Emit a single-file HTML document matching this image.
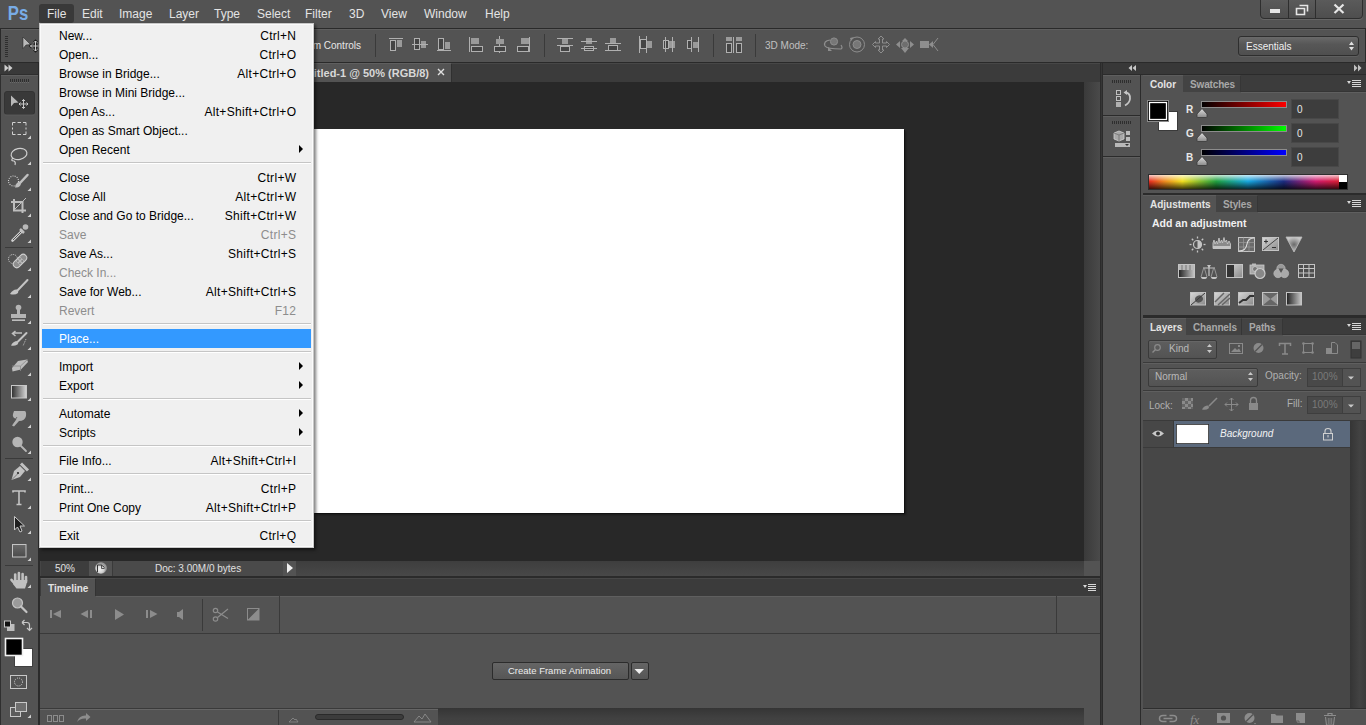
<!DOCTYPE html><html><head><meta charset="utf-8"><style>
*{margin:0;padding:0;box-sizing:border-box}
html,body{width:1366px;height:725px;overflow:hidden;background:#535353;font-family:"Liberation Sans",sans-serif;position:relative}
.a{position:absolute}
.t{position:absolute;white-space:nowrap;line-height:1}
svg{position:absolute;overflow:visible}
.mi{position:absolute;top:7px;font-size:12px;color:#e4e4e4;line-height:14px;white-space:nowrap}
.sep{position:absolute;width:1px;background:#3b3b3b}
#menu{left:39px;top:23px;width:275px;height:525px;background:#f0f0f0;border:1px solid #c8c8c8;box-shadow:inset 1px 1px 0 #fafafa,inset -1px -1px 0 #fbfbfb,2px 2px 3px rgba(0,0,0,.5)}
.it{position:absolute;left:0;width:273px;height:19px;font-size:12px;color:#000}
.it .l{position:absolute;left:19px;top:3px;line-height:14px;white-space:nowrap}
.it .r{position:absolute;right:16.7px;top:3px;line-height:14px;white-space:nowrap;letter-spacing:0.3px}
.it.d{color:#8d8d8d}
.it.h{background:#3399ff;color:#fff;left:2px;width:269px}
.it.h .l{left:17px}
.ms{position:absolute;left:3px;width:268px;height:1px;background:#c5c5c5}
.ms2{position:absolute;left:3px;width:268px;height:1px;background:#ffffff}
.arr{position:absolute;left:259px;top:5px;width:0;height:0;border-left:4px solid #000;border-top:4px solid transparent;border-bottom:4px solid transparent}
</style></head><body>
<div class="a" style="left:0;top:0;width:1366px;height:28px;background:#535353"></div>
<svg class="a" style="left:0;top:0" width="40" height="28"><text x="7.8" y="20.2" font-family="Liberation Sans" font-weight="bold" font-size="21" textLength="20.5" lengthAdjust="spacingAndGlyphs" fill="#78ace6">Ps</text></svg>
<div class="a" style="left:39px;top:4px;width:35px;height:19px;background:#393939;border-radius:3px"></div>
<div class="mi" style="left:47px">File</div>
<div class="mi" style="left:82px">Edit</div>
<div class="mi" style="left:119px">Image</div>
<div class="mi" style="left:169px">Layer</div>
<div class="mi" style="left:214px">Type</div>
<div class="mi" style="left:257px">Select</div>
<div class="mi" style="left:305px">Filter</div>
<div class="mi" style="left:349px">3D</div>
<div class="mi" style="left:381px">View</div>
<div class="mi" style="left:424px">Window</div>
<div class="mi" style="left:485px">Help</div>
<div class="a" style="left:0;top:28px;width:1366px;height:1px;background:#2a2a2a"></div>
<div class="a" style="left:0;top:29px;width:1366px;height:1px;background:#5e5e5e"></div>
<div class="a" style="left:0;top:62px;width:1366px;height:1px;background:#2a2a2a"></div>
<div class="a" style="left:0;top:28px;width:1px;height:35px;background:#2a2a2a"></div>
<div class="a" style="left:1365px;top:28px;width:1px;height:35px;background:#2a2a2a"></div>
<svg class="a" style="left:0;top:0" width="1366" height="63" viewBox="0 0 1366 63"><rect x="5" y="36" width="3" height="1" fill="#2e2e2e"/><rect x="5" y="38" width="3" height="1" fill="#2e2e2e"/><rect x="5" y="40" width="3" height="1" fill="#2e2e2e"/><rect x="5" y="42" width="3" height="1" fill="#2e2e2e"/><rect x="5" y="44" width="3" height="1" fill="#2e2e2e"/><rect x="5" y="46" width="3" height="1" fill="#2e2e2e"/><rect x="5" y="48" width="3" height="1" fill="#2e2e2e"/><rect x="5" y="50" width="3" height="1" fill="#2e2e2e"/><rect x="5" y="52" width="3" height="1" fill="#2e2e2e"/><rect x="5" y="54" width="3" height="1" fill="#2e2e2e"/><rect x="5" y="56" width="3" height="1" fill="#2e2e2e"/><path d="M23 37 L30.5 44.5 L26 45 L23 48.5Z" fill="#b9b9b9" stroke="#1e1e1e" stroke-width="0.5"/><path d="M35.5 41 V51 M30.5 46 H40.5 M34 42.5 L35.5 41 L37 42.5 M34 49.5 L35.5 51 L37 49.5 M32 44.5 L30.5 46 L32 47.5 M39 44.5 L40.5 46 L39 47.5" stroke="#1e1e1e" fill="none" stroke-width="2.6"/><path d="M35.5 41 V51 M30.5 46 H40.5 M34 42.5 L35.5 41 L37 42.5 M34 49.5 L35.5 51 L37 49.5 M32 44.5 L30.5 46 L32 47.5 M39 44.5 L40.5 46 L39 47.5" stroke="#d0d0d0" fill="none" stroke-width="1"/><line x1="375.5" y1="34" x2="375.5" y2="57" stroke="#3a3a3a"/><line x1="544.5" y1="34" x2="544.5" y2="57" stroke="#3a3a3a"/><line x1="713.5" y1="34" x2="713.5" y2="57" stroke="#3a3a3a"/><line x1="755.5" y1="34" x2="755.5" y2="57" stroke="#3a3a3a"/><line x1="389" y1="38.5" x2="403" y2="38.5" stroke="#b0b0b0" stroke-width="1"/><rect x="390.5" y="40.5" width="5" height="10" fill="#444" stroke="#b0b0b0" stroke-width="1"/><rect x="397" y="40" width="5" height="7" fill="#9a9a9a"/><rect x="414.5" y="38.5" width="5" height="11" fill="#444" stroke="#b0b0b0" stroke-width="1"/><rect x="421" y="41" width="5" height="7" fill="#9a9a9a"/><line x1="412" y1="44.5" x2="428" y2="44.5" stroke="#b0b0b0" stroke-width="1"/><rect x="438.5" y="38.5" width="5" height="11" fill="#444" stroke="#b0b0b0" stroke-width="1"/><rect x="445" y="42" width="5" height="7" fill="#9a9a9a"/><line x1="437" y1="50.5" x2="451" y2="50.5" stroke="#b0b0b0" stroke-width="1"/><line x1="469.5" y1="37" x2="469.5" y2="52" stroke="#b0b0b0" stroke-width="1"/><rect x="471" y="38" width="8" height="6" fill="#9a9a9a"/><rect x="471.5" y="46.5" width="11" height="5" fill="#444" stroke="#b0b0b0" stroke-width="1"/><line x1="499.5" y1="36" x2="499.5" y2="53" stroke="#b0b0b0" stroke-width="1"/><rect x="496" y="39" width="8" height="5" fill="#9a9a9a"/><rect x="494.5" y="46.5" width="11" height="5" fill="#444" stroke="#b0b0b0" stroke-width="1"/><line x1="529.5" y1="37" x2="529.5" y2="52" stroke="#b0b0b0" stroke-width="1"/><rect x="521" y="38" width="8" height="6" fill="#9a9a9a"/><rect x="517.5" y="46.5" width="11" height="5" fill="#444" stroke="#b0b0b0" stroke-width="1"/><line x1="557" y1="38.5" x2="573" y2="38.5" stroke="#b0b0b0" stroke-width="1"/><rect x="562" y="39" width="6" height="5" fill="#9a9a9a"/><line x1="557" y1="45.5" x2="573" y2="45.5" stroke="#b0b0b0" stroke-width="1"/><rect x="560.5" y="46.5" width="9" height="5" fill="#444" stroke="#b0b0b0" stroke-width="1"/><rect x="586" y="38" width="6" height="6" fill="#9a9a9a"/><line x1="581" y1="41.5" x2="597" y2="41.5" stroke="#b0b0b0" stroke-width="1"/><rect x="584.5" y="46.5" width="9" height="4" fill="#444" stroke="#b0b0b0" stroke-width="1"/><line x1="581" y1="48.5" x2="597" y2="48.5" stroke="#b0b0b0" stroke-width="1"/><rect x="610" y="38" width="6" height="5" fill="#9a9a9a"/><line x1="605" y1="43.5" x2="621" y2="43.5" stroke="#b0b0b0" stroke-width="1"/><rect x="608.5" y="45.5" width="9" height="5" fill="#444" stroke="#b0b0b0" stroke-width="1"/><line x1="605" y1="50.5" x2="621" y2="50.5" stroke="#b0b0b0" stroke-width="1"/><line x1="639.5" y1="36" x2="639.5" y2="53" stroke="#b0b0b0" stroke-width="1"/><rect x="640.5" y="39.5" width="6" height="9" fill="#444" stroke="#b0b0b0" stroke-width="1"/><line x1="646.5" y1="36" x2="646.5" y2="53" stroke="#b0b0b0" stroke-width="1"/><rect x="647" y="41" width="5" height="7" fill="#9a9a9a"/><rect x="663.5" y="40.5" width="5" height="8" fill="#444" stroke="#b0b0b0" stroke-width="1"/><line x1="665.5" y1="37" x2="665.5" y2="52" stroke="#b0b0b0" stroke-width="1"/><rect x="669" y="41" width="6" height="7" fill="#9a9a9a"/><line x1="672.5" y1="37" x2="672.5" y2="52" stroke="#b0b0b0" stroke-width="1"/><rect x="687.5" y="40.5" width="4" height="8" fill="#444" stroke="#b0b0b0" stroke-width="1"/><line x1="691.5" y1="37" x2="691.5" y2="52" stroke="#b0b0b0" stroke-width="1"/><rect x="693" y="42" width="5" height="6" fill="#9a9a9a"/><line x1="698.5" y1="37" x2="698.5" y2="52" stroke="#b0b0b0" stroke-width="1"/><rect x="726" y="37" width="6" height="4" fill="#9a9a9a"/><rect x="726.5" y="43.5" width="5" height="9" fill="#444" stroke="#b0b0b0" stroke-width="1"/><line x1="733.5" y1="37" x2="733.5" y2="53" stroke="#b0b0b0" stroke-width="1"/><rect x="736" y="37" width="6" height="4" fill="#9a9a9a"/><rect x="736.5" y="43.5" width="5" height="9" fill="#444" stroke="#b0b0b0" stroke-width="1"/><circle cx="834" cy="41.5" r="3.6" fill="#777" stroke="#8e8e8e" stroke-width="1"/><path d="M830 40 Q823 41 825 46 Q827 49 841 49 Q843 48 841 45" fill="none" stroke="#8e8e8e" stroke-width="1.2"/><path d="M828 47 L832 51 L828 51Z" fill="#8e8e8e"/><circle cx="857" cy="44.5" r="7.5" fill="none" stroke="#8e8e8e" stroke-width="1"/><circle cx="857" cy="44.5" r="4" fill="#777" stroke="#8e8e8e" stroke-width="1"/><path d="M850 38 L854 37 L851 41Z" fill="#8e8e8e"/><path d="M881 36 L884 39 H882.5 V43 H886.5 V41.5 L889.5 44.5 L886.5 47.5 V46 H882.5 V50 H884 L881 53 L878 50 H879.5 V46 H875.5 V47.5 L872.5 44.5 L875.5 41.5 V43 H879.5 V39 H878Z" fill="none" stroke="#8e8e8e" stroke-width="1"/><path d="M905 38 L908 41 H902Z M905 53 L909 48 H901Z M896 44.5 L900 41 V48Z M914 44.5 L910 41 V48Z" fill="#8e8e8e"/><circle cx="905" cy="44.5" r="3.5" fill="#6e6e6e" stroke="#8e8e8e"/><rect x="920" y="41" width="9" height="7" fill="#8e8e8e"/><path d="M929 44.5 L933 41 V48Z" fill="#8e8e8e"/><path d="M938 38 L933 44.5 L938 51" fill="none" stroke="#8e8e8e" stroke-width="1"/></svg>
<div class="t" style="right:1005px;top:41px;font-size:10px;color:#e6e6e6">Show Transform Controls</div>
<div class="t" style="left:765px;top:41px;font-size:10px;color:#c0c0c0">3D Mode:</div>
<div class="a" style="left:1238px;top:36px;width:121px;height:20px;border:1px solid #2e2e2e;border-radius:3px;background:linear-gradient(#6a6a6a,#575757 40%,#4f4f4f);box-shadow:0 1px 0 #5f5f5f"></div>
<div class="t" style="left:1246px;top:42px;font-size:10px;color:#f0f0f0">Essentials</div>
<svg class="a" style="left:0;top:0" width="1366" height="63"><path d="M1349 45 L1351.5 41.5 L1354 45Z M1349 47 L1351.5 50.5 L1354 47Z" fill="#e0e0e0"/></svg>
<div class="a" style="left:1260px;top:-3px;width:103px;height:22px;border:1px solid #2e2e2e;border-radius:0 0 4px 4px;background:linear-gradient(#5c5c5c,#4e4e4e);box-shadow:0 1px 0 #666"></div>
<div class="a" style="left:1288px;top:0;width:1px;height:18px;background:#2e2e2e"></div>
<div class="a" style="left:1315px;top:0;width:1px;height:18px;background:#2e2e2e"></div>
<svg class="a" style="left:0;top:0" width="1366" height="28"><rect x="1270" y="9" width="10" height="4" fill="#e6e6e6"/><path d="M1299.5 5.5 H1307.5 V11.5 M1296.5 8.5 H1304.5 V14.5 H1296.5Z" fill="none" stroke="#e6e6e6" stroke-width="1.6"/><path d="M1334.5 4.5 L1343.5 13 M1343.5 4.5 L1334.5 13" stroke="#e6e6e6" stroke-width="2.2"/></svg>
<div class="a" style="left:0;top:63px;width:38px;height:662px;background:#535353;border-left:1px solid #2f2f2f"></div>
<div class="a" style="left:0;top:63px;width:38px;height:11px;background:#393939"></div>
<div class="a" style="left:38px;top:63px;width:2px;height:662px;background:#2b2b2b"></div>
<div class="a" style="left:1px;top:74px;width:37px;height:1px;background:#2e2e2e"></div>
<div class="a" style="left:1px;top:75px;width:37px;height:1px;background:#5f5f5f"></div>
<svg class="a" style="left:0;top:0" width="40" height="725" viewBox="0 0 40 725"><path d="M4.5 64.5 L8.5 68 L4.5 71.5Z M8.5 64.5 L12.5 68 L8.5 71.5Z" fill="#cfcfcf"/><rect x="10" y="79" width="1" height="3" fill="#2e2e2e"/><rect x="10" y="82" width="1" height="1" fill="#6a6a6a"/><rect x="12" y="79" width="1" height="3" fill="#2e2e2e"/><rect x="12" y="82" width="1" height="1" fill="#6a6a6a"/><rect x="14" y="79" width="1" height="3" fill="#2e2e2e"/><rect x="14" y="82" width="1" height="1" fill="#6a6a6a"/><rect x="16" y="79" width="1" height="3" fill="#2e2e2e"/><rect x="16" y="82" width="1" height="1" fill="#6a6a6a"/><rect x="18" y="79" width="1" height="3" fill="#2e2e2e"/><rect x="18" y="82" width="1" height="1" fill="#6a6a6a"/><rect x="20" y="79" width="1" height="3" fill="#2e2e2e"/><rect x="20" y="82" width="1" height="1" fill="#6a6a6a"/><rect x="22" y="79" width="1" height="3" fill="#2e2e2e"/><rect x="22" y="82" width="1" height="1" fill="#6a6a6a"/><rect x="24" y="79" width="1" height="3" fill="#2e2e2e"/><rect x="24" y="82" width="1" height="1" fill="#6a6a6a"/><rect x="26" y="79" width="1" height="3" fill="#2e2e2e"/><rect x="26" y="82" width="1" height="1" fill="#6a6a6a"/><rect x="28" y="79" width="1" height="3" fill="#2e2e2e"/><rect x="28" y="82" width="1" height="1" fill="#6a6a6a"/><rect x="4.5" y="91.5" width="30" height="23" rx="2.5" fill="#393939" stroke="#333" stroke-width="1"/><line x1="5" y1="115" x2="34" y2="115" stroke="#5c5c5c"/><path d="M11 95.5 L18.5 102.5 L14 103 L11 106.5Z" fill="#b9b9b9"/><path d="M23.5 99.5 V108.5 M19 104 H28" stroke="#c8c8c8" stroke-width="1"/><path d="M22 101 L23.5 99.5 L25 101 M22 107 L23.5 108.5 L25 107 M20.5 102.5 L19 104 L20.5 105.5 M26.5 102.5 L28 104 L26.5 105.5" stroke="#c8c8c8" fill="none"/><path d="M31 135.5 L31 139 L27.5 139Z" fill="#d0d0d0"/><path d="M31 161.5 L31 165 L27.5 165Z" fill="#d0d0d0"/><path d="M31 187.5 L31 191 L27.5 191Z" fill="#d0d0d0"/><path d="M31 213.5 L31 217 L27.5 217Z" fill="#d0d0d0"/><path d="M31 239.5 L31 243 L27.5 243Z" fill="#d0d0d0"/><path d="M31 267.5 L31 271 L27.5 271Z" fill="#d0d0d0"/><path d="M31 294.5 L31 298 L27.5 298Z" fill="#d0d0d0"/><path d="M31 320.5 L31 324 L27.5 324Z" fill="#d0d0d0"/><path d="M31 346.5 L31 350 L27.5 350Z" fill="#d0d0d0"/><path d="M31 372.5 L31 376 L27.5 376Z" fill="#d0d0d0"/><path d="M31 397.5 L31 401 L27.5 401Z" fill="#d0d0d0"/><path d="M31 424.5 L31 428 L27.5 428Z" fill="#d0d0d0"/><path d="M31 450.5 L31 454 L27.5 454Z" fill="#d0d0d0"/><path d="M31 477.5 L31 481 L27.5 481Z" fill="#d0d0d0"/><path d="M31 505.5 L31 509 L27.5 509Z" fill="#d0d0d0"/><path d="M31 530.5 L31 534 L27.5 534Z" fill="#d0d0d0"/><path d="M31 557.5 L31 561 L27.5 561Z" fill="#d0d0d0"/><path d="M31 584.5 L31 588 L27.5 588Z" fill="#d0d0d0"/><path d="M31 714.5 L31 718 L27.5 718Z" fill="#d0d0d0"/><path d="M12.5 125.5 V122.5 H15.5 M17.5 122.5 H21 M23 122.5 H26 V125.5 M26 127.5 V129.5 M26 131.5 V134.5 H23 M21 134.5 H17.5 M15.5 134.5 H12.5 V131.5 M12.5 129.5 V127.5" fill="none" stroke="#d2d2d2" stroke-width="1"/><ellipse cx="19" cy="154" rx="8" ry="5.5" fill="none" stroke="#cfcfcf" stroke-width="1.2" transform="rotate(-12 19 154)"/><path d="M13 158 Q10 161 14 161 Q16 162 15 165" fill="none" stroke="#cfcfcf" stroke-width="1.1"/><circle cx="13.5" cy="181" r="5" fill="none" stroke="#e0e0e0" stroke-width="1.1" stroke-dasharray="0.9 1.3"/><path d="M27.5 175 L20 183" stroke="#c0c0c0" stroke-width="2.5" stroke-linecap="round"/><path d="M15 187.5 Q16 182 20 181.5 Q22 183 20 186 Q18 188 15 187.5Z" fill="#bdbdbd"/><path d="M14 199 V210.5 H26 M11 202 H22.5 V213" fill="none" stroke="#bdbdbd" stroke-width="2"/><path d="M15 209 L26 198" stroke="#bdbdbd" stroke-width="1"/><path d="M12.5 240.5 L22 231" stroke="#d0d0d0" stroke-width="2.6" stroke-linecap="round"/><path d="M13 240 L21.5 231.5" stroke="#555" stroke-width="1"/><path d="M20 229 L24 233" stroke="#c0c0c0" stroke-width="2.5"/><circle cx="25.5" cy="227" r="2.8" fill="#b8b8b8"/><line x1="5" y1="247.5" x2="33" y2="247.5" stroke="#3a3a3a"/><circle cx="13" cy="259" r="4.5" fill="none" stroke="#e6e6e6" stroke-width="1" stroke-dasharray="0.9 1.2"/><g transform="rotate(-45 20 261)"><rect x="12" y="257.5" width="16" height="7" rx="3.5" fill="#8e8e8e" stroke="#d0d0d0" stroke-width="1"/><rect x="17" y="258" width="6" height="6" fill="#b8b8b8"/><circle cx="18.5" cy="259.5" r="0.6" fill="#444"/><circle cx="21.5" cy="259.5" r="0.6" fill="#444"/><circle cx="18.5" cy="262.5" r="0.6" fill="#444"/><circle cx="21.5" cy="262.5" r="0.6" fill="#444"/></g><path d="M27.5 280 L17 291" stroke="#c4c4c4" stroke-width="2" stroke-linecap="round"/><path d="M10 294 Q13 289 17 289.5 Q19 291 18 293 Q15 295.5 10 294Z" fill="#c4c4c4"/><circle cx="18.5" cy="307.5" r="2.8" fill="#b4b4b4"/><rect x="17" y="309" width="3" height="5" fill="#b4b4b4"/><rect x="11" y="314" width="15" height="4" fill="#b4b4b4"/><rect x="12" y="319.5" width="13" height="1.3" fill="#d8d8d8"/><path d="M26.5 333 L18 341.5" stroke="#c4c4c4" stroke-width="2" stroke-linecap="round"/><path d="M11 345.5 Q13 341 17.5 341 Q19 343 17.5 344.5 Q14 346.5 11 345.5Z" fill="#c4c4c4"/><path d="M22 333 H13 M15.5 331 L12.5 333.5 L15.5 336" fill="none" stroke="#c0c0c0" stroke-width="1.5"/><path d="M26 339 L23 346" stroke="#e0e0e0" stroke-dasharray="0.8 1.2"/><path d="M12 368 L18 361 L27 359.5 L28 362 L21 369.5 L12.5 371.5Z" fill="#bdbdbd"/><path d="M12 366 H20.5 L27.5 359.5" fill="none" stroke="#8a8a8a" stroke-width="0.8"/><path d="M20.5 366 V371" stroke="#8a8a8a" stroke-width="0.8"/><defs><linearGradient id="gr1" x1="0" x2="1"><stop offset="0" stop-color="#2e2e2e"/><stop offset="1" stop-color="#d6d6d6"/></linearGradient><linearGradient id="gr2" x1="0" x2="0" y1="0" y2="1"><stop offset="0" stop-color="#6a6a6a"/><stop offset="1" stop-color="#4a4a4a"/></linearGradient></defs><rect x="11.5" y="385.5" width="15" height="12.5" fill="url(#gr1)" stroke="#c8c8c8" stroke-width="1"/><path d="M14 411 H24.5 Q26.5 411 26 416 Q25 421 19 421 L14 426.5 L12 425.5 L16.5 419 Q12 418 13 414Z" fill="#b2b2b2"/><path d="M17 417 L13 423" stroke="#555" stroke-width="0.8"/><circle cx="17.5" cy="442" r="5.2" fill="#b6b6b6"/><path d="M20.5 445.5 L26 451" stroke="#b6b6b6" stroke-width="1.8" stroke-linecap="round"/><line x1="5" y1="458.5" x2="33" y2="458.5" stroke="#3a3a3a"/><path d="M11.5 480 L14 471 L20 466 L25 471 L20 477Z" fill="#c2c2c2"/><path d="M21 463.5 L28 470.5" stroke="#c2c2c2" stroke-width="3"/><circle cx="18" cy="473" r="1.1" fill="#2a2a2a"/><path d="M12 479.5 L17.5 474" stroke="#5a5a5a" stroke-width="0.7"/><path d="M13 492.5 V491 H25 V492.5 M19 491 V504.5 M16.5 504.5 H21.5" fill="none" stroke="#c4c4c4" stroke-width="1.6"/><path d="M14.5 516.5 V530 L17.5 527 L20 532 L22 531 L20 526 L24.5 526Z" fill="#1e1e1e" stroke="#c8c8c8" stroke-width="1"/><rect x="12.5" y="544.5" width="13.5" height="12.5" fill="url(#gr2)" stroke="#c4c4c4" stroke-width="1"/><line x1="5" y1="565.5" x2="33" y2="565.5" stroke="#3a3a3a"/><g stroke="#c0c0c0" stroke-width="2.6" stroke-linecap="round"><path d="M15.2 574.5 V582"/><path d="M18.9 573 V581"/><path d="M22.6 574 V581"/><path d="M26 577 V582"/><path d="M11.5 579.8 L15.5 584.5"/></g><path d="M14 580 H27.3 L26.2 585 L25 588.5 H16.5 L13 584Z" fill="#c0c0c0"/><circle cx="17.5" cy="603" r="5" fill="#9a9a9a" stroke="#c4c4c4" stroke-width="1.2"/><path d="M21 606.5 L26.5 612" stroke="#c4c4c4" stroke-width="2.2" stroke-linecap="round"/><rect x="7" y="624" width="7.5" height="7" fill="#bdbdbd"/><rect x="4.5" y="621" width="6" height="6" fill="#111" stroke="#c8c8c8" stroke-width="1"/><path d="M23 622.5 H27 Q29.5 622.5 29.5 625 V630 M22 622.5 L24.5 620 M22 622.5 L24.5 625 M27 628 L29.5 630.5 L32 628" fill="none" stroke="#c8c8c8" stroke-width="1.2"/><rect x="14.5" y="648.5" width="18" height="18" fill="#fff" stroke="#404040" stroke-width="1"/><rect x="5.5" y="638.5" width="17" height="17" fill="#000" stroke="#f0f0f0" stroke-width="1.6"/><rect x="10.5" y="675.5" width="16" height="13" fill="none" stroke="#c8c8c8" stroke-width="1"/><circle cx="18.5" cy="682" r="4" fill="none" stroke="#e0e0e0" stroke-dasharray="0.9 1.2"/><rect x="10.5" y="707.5" width="10" height="9" fill="#5c5c5c" stroke="#c8c8c8" stroke-width="1"/><rect x="15.5" y="702.5" width="11" height="9" fill="#6e6e6e" stroke="#c8c8c8" stroke-width="1"/></svg>
<div class="a" style="left:40px;top:63px;width:1060px;height:19px;background:#3b3b3b;border-top:1px solid #474747"></div>
<div class="a" style="left:40px;top:63px;width:412px;height:19px;background:#535353;border-top:1px solid #5f5f5f;border-right:1px solid #303030"></div>
<div class="a" style="left:40px;top:82px;width:1044px;height:479px;background:#282828"></div>
<div class="a" style="left:314px;top:129px;width:590px;height:384px;background:#ffffff;box-shadow:1px 1px 0 #111,2px 2px 2px rgba(0,0,0,.35)"></div>
<div class="a" style="left:1084px;top:82px;width:16px;height:479px;background:linear-gradient(90deg,#3a3a3a,#4a4a4a)"></div>
<div class="a" style="left:40px;top:561px;width:1060px;height:15px;background:#454545"></div>
<div class="a" style="left:40px;top:576px;width:1060px;height:2px;background:#2b2b2b"></div>
<div class="a" style="left:1100px;top:63px;width:3px;height:662px;background:linear-gradient(90deg,#2b2b2b 33%,#363636 33%,#363636 66%,#2b2b2b 66%)"></div>
<div class="t" style="right:937px;top:68px;font-size:11px;font-weight:bold;color:#d8d8d8">Untitled-1 @ 50% (RGB/8)</div>
<svg class="a" style="left:0;top:0" width="1366" height="100"><path d="M438 69 L444 75 M444 69 L438 75" stroke="#e0e0e0" stroke-width="1.4"/></svg>
<div class="a" style="left:41px;top:561px;width:48px;height:15px;background:#3d3d3d"></div>
<div class="a" style="left:89px;top:561px;width:23px;height:15px;background:#535353"></div>
<div class="a" style="left:112px;top:561px;width:171px;height:15px;background:#4a4a4a;border-left:1px solid #3a3a3a"></div>
<div class="a" style="left:283px;top:561px;width:13px;height:15px;background:#535353"></div>
<div class="a" style="left:296px;top:561px;width:788px;height:15px;background:linear-gradient(#3e3e3e,#484848)"></div>
<div class="a" style="left:1084px;top:561px;width:16px;height:15px;background:#535353"></div>
<div class="t" style="left:55px;top:564px;font-size:10px;color:#e0e0e0">50%</div>
<div class="t" style="left:155px;top:564px;font-size:10px;color:#e0e0e0">Doc: 3.00M/0 bytes</div>
<svg class="a" style="left:0;top:540px" width="400" height="40"><defs><radialGradient id="sbi" cx="0.4" cy="0.6"><stop offset="0" stop-color="#f2f2f2"/><stop offset="0.7" stop-color="#d0d0d0"/><stop offset="1" stop-color="#9a9a9a"/></radialGradient></defs><circle cx="101" cy="28" r="5.8" fill="url(#sbi)"/><path d="M97.5 32 V25 H101.5 L104.5 27.5" fill="none" stroke="#333" stroke-width="1"/><path d="M101.5 25 V28.5 H104.5" fill="none" stroke="#333" stroke-width="0.8"/><path d="M287 23 L293 28 L287 33Z" fill="#f0f0f0"/></svg>
<div class="a" style="left:40px;top:578px;width:1060px;height:147px;background:#535353"></div>
<div class="a" style="left:40px;top:578px;width:1060px;height:18px;background:#3b3b3b;border-top:1px solid #474747"></div>
<div class="a" style="left:41px;top:578px;width:55px;height:18px;background:#535353;border-top:1px solid #5f5f5f;border-right:1px solid #333"></div>
<div class="t" style="left:48px;top:584px;font-size:10px;font-weight:bold;color:#e2e2e2">Timeline</div>
<div class="a" style="left:96px;top:596px;width:1004px;height:1px;background:#5f5f5f"></div>
<div class="a" style="left:40px;top:633px;width:1060px;height:1px;background:#3a3a3a"></div>
<div class="a" style="left:40px;top:708px;width:398px;height:1px;background:#3a3a3a"></div>
<div class="a" style="left:40px;top:709px;width:398px;height:1px;background:#666"></div>
<div class="a" style="left:438px;top:708px;width:646px;height:17px;background:linear-gradient(#353535,#3a3a3a 25%,#414141 60%,#434343)"></div>
<svg class="a" style="left:0;top:0" width="1100" height="725"><rect x="50" y="610" width="2" height="8" fill="#8c8c8c"/><path d="M61 610 V618 L53 614Z" fill="#8c8c8c"/><path d="M88 610 V618 L80.5 614Z" fill="#8c8c8c"/><rect x="90" y="610" width="2" height="8" fill="#8c8c8c"/><path d="M115 609 V620 L124 614.5Z" fill="#8c8c8c"/><rect x="146" y="610" width="2" height="8" fill="#8c8c8c"/><path d="M150 610 V618 L157.5 614Z" fill="#8c8c8c"/><path d="M177 612 H179 L183 609 V620 L179 617 H177Z" fill="#8c8c8c"/><line x1="202.5" y1="599" x2="202.5" y2="631" stroke="#3a3a3a"/><line x1="279.5" y1="596" x2="279.5" y2="633" stroke="#3a3a3a"/><line x1="1056.5" y1="596" x2="1056.5" y2="633" stroke="#3a3a3a"/><circle cx="215.5" cy="610.5" r="2.2" fill="none" stroke="#8c8c8c" stroke-width="1.2"/><circle cx="215.5" cy="619" r="2.2" fill="none" stroke="#8c8c8c" stroke-width="1.2"/><path d="M217.5 612 L228 618.5 M217.5 617.5 L228 609" stroke="#8c8c8c" stroke-width="1.2"/><rect x="247.5" y="608.5" width="11.5" height="11.5" fill="none" stroke="#8c8c8c" stroke-width="1"/><path d="M259 608.5 V620 H247.5Z" fill="#8c8c8c"/><rect x="47.5" y="715.5" width="4" height="6" fill="none" stroke="#8c8c8c"/><rect x="53.5" y="715.5" width="4" height="6" fill="none" stroke="#8c8c8c"/><rect x="59.5" y="715.5" width="4" height="6" fill="none" stroke="#8c8c8c"/><path d="M77 722 Q79 715 86 715.5 V713 L90.5 717 L86 721 V718.5 Q80 718 77 722Z" fill="#8c8c8c"/><line x1="278.5" y1="710" x2="278.5" y2="725" stroke="#3a3a3a"/><path d="M289 722 L293 718 L295 720 L296 719 L298 722Z" fill="none" stroke="#8c8c8c" stroke-width="0.8"/><rect x="315.5" y="714.5" width="88" height="5" rx="2.5" fill="#3c3c3c" stroke="#2a2a2a"/><path d="M414 722 L419 716 L422 719 L425 714 L431 722Z" fill="none" stroke="#8c8c8c" stroke-width="0.9"/><path d="M1083 585 L1087 585 L1085 588Z" fill="#d8d8d8"/><path d="M1088 584.5 H1096 M1088 586.5 H1096 M1088 588.5 H1096 M1088 590.5 H1096" stroke="#d8d8d8" stroke-width="1"/></svg>
<div class="a" style="left:492px;top:662px;width:137px;height:18px;border:1px solid #2c2c2c;border-radius:2px;background:linear-gradient(#656565,#565656)"></div>
<div class="t" style="left:508px;top:666px;font-size:9.5px;color:#ececec">Create Frame Animation</div>
<div class="a" style="left:631px;top:662px;width:18px;height:18px;border:1px solid #2c2c2c;border-radius:2px;background:linear-gradient(#656565,#565656)"></div>
<svg class="a" style="left:0;top:0" width="700" height="725"><path d="M634.5 669 H644 L639.25 674Z" fill="#eeeeee"/></svg>
<div class="a" style="left:1103px;top:63px;width:263px;height:11px;background:#383838"></div>
<div class="a" style="left:1103px;top:74px;width:263px;height:1px;background:#2b2b2b"></div>
<div class="a" style="left:1103px;top:75px;width:38px;height:650px;background:#2b2b2b"></div>
<div class="a" style="left:1103px;top:75px;width:37px;height:40px;background:#535353;border-top:1px solid #5f5f5f"></div>
<div class="a" style="left:1103px;top:116px;width:37px;height:40px;background:#535353;border-top:1px solid #5f5f5f"></div>
<div class="a" style="left:1103px;top:157px;width:37px;height:568px;background:#535353;border-top:1px solid #5f5f5f"></div>
<svg class="a" style="left:0;top:0" width="1366" height="200"><path d="M1136 65 L1132.5 68 L1136 71Z M1132 65 L1128.5 68 L1132 71Z" fill="#c8c8c8"/><path d="M1358 64.5 L1361.5 68 L1358 71.5Z M1354 64.5 L1357.5 68 L1354 71.5Z" fill="#c0c0c0"/><rect x="1112" y="80" width="1" height="3" fill="#2e2e2e"/><rect x="1114" y="80" width="1" height="3" fill="#2e2e2e"/><rect x="1116" y="80" width="1" height="3" fill="#2e2e2e"/><rect x="1118" y="80" width="1" height="3" fill="#2e2e2e"/><rect x="1120" y="80" width="1" height="3" fill="#2e2e2e"/><rect x="1122" y="80" width="1" height="3" fill="#2e2e2e"/><rect x="1124" y="80" width="1" height="3" fill="#2e2e2e"/><rect x="1126" y="80" width="1" height="3" fill="#2e2e2e"/><rect x="1128" y="80" width="1" height="3" fill="#2e2e2e"/><rect x="1130" y="80" width="1" height="3" fill="#2e2e2e"/><rect x="1112" y="121" width="1" height="3" fill="#2e2e2e"/><rect x="1114" y="121" width="1" height="3" fill="#2e2e2e"/><rect x="1116" y="121" width="1" height="3" fill="#2e2e2e"/><rect x="1118" y="121" width="1" height="3" fill="#2e2e2e"/><rect x="1120" y="121" width="1" height="3" fill="#2e2e2e"/><rect x="1122" y="121" width="1" height="3" fill="#2e2e2e"/><rect x="1124" y="121" width="1" height="3" fill="#2e2e2e"/><rect x="1126" y="121" width="1" height="3" fill="#2e2e2e"/><rect x="1128" y="121" width="1" height="3" fill="#2e2e2e"/><rect x="1130" y="121" width="1" height="3" fill="#2e2e2e"/><rect x="1116.5" y="90.5" width="4" height="4" fill="none" stroke="#c0c0c0"/><rect x="1116.5" y="96.5" width="4" height="4" fill="none" stroke="#c0c0c0"/><rect x="1116" y="102" width="5" height="5" fill="#b0b0b0"/><path d="M1125.5 92.5 Q1130.5 93 1130 99 Q1129.5 103 1125 105.5" fill="none" stroke="#c4c4c4" stroke-width="1.8"/><path d="M1123.5 92.5 L1127 90 V95Z" fill="#c4c4c4"/><path d="M1119 131 L1124 133 V139 L1119 141 L1114 139 V133Z" fill="#a8a8a8" stroke="#d0d0d0" stroke-width="0.8"/><path d="M1114 133 L1119 135 L1124 133 M1119 135 V141" fill="none" stroke="#707070" stroke-width="0.8"/><rect x="1126" y="131" width="4" height="4" fill="#bdbdbd"/><rect x="1126" y="137" width="4" height="4" fill="#bdbdbd"/><rect x="1115" y="143" width="15" height="4" fill="#b8b8b8"/><path d="M1125 144 H1129 L1127 146Z" fill="#333"/></svg>
<div class="a" style="left:1143px;top:75px;width:223px;height:118px;background:#535353"></div>
<div class="a" style="left:1143px;top:75px;width:223px;height:17px;background:#3c3c3c"></div>
<div class="a" style="left:1143px;top:75px;width:40px;height:17px;background:#535353;border-top:1px solid #5d5d5d"></div>
<div class="t" style="left:1150px;top:80px;font-size:10px;font-weight:bold;color:#e4e4e4;letter-spacing:0">Color</div>
<div class="a" style="left:1183px;top:75px;width:58px;height:17px;background:#434343;border-right:1px solid #363636;border-top:1px solid #4a4a4a"></div>
<div class="t" style="left:1190px;top:80px;font-size:10px;font-weight:bold;color:#a8a8a8;letter-spacing:-0.15px">Swatches</div>
<div class="a" style="left:1241px;top:91px;width:125px;height:1px;background:#353535"></div>
<div class="a" style="left:1241px;top:92px;width:125px;height:1px;background:#5f5f5f"></div>
<svg class="a" style="left:0;top:0" width="1366" height="725"><path d="M1347 81 H1351 L1349 84Z" fill="#d8d8d8"/><path d="M1352 80.5 H1361 M1352 82.5 H1361 M1352 84.5 H1361 M1352 86.5 H1361" stroke="#d8d8d8" stroke-width="1"/></svg>
<div class="a" style="left:1143px;top:193px;width:223px;height:2px;background:#2b2b2b"></div>
<div class="a" style="left:1143px;top:195px;width:223px;height:120px;background:#535353"></div>
<div class="a" style="left:1143px;top:195px;width:223px;height:17px;background:#3c3c3c"></div>
<div class="a" style="left:1143px;top:195px;width:73px;height:17px;background:#535353;border-top:1px solid #5d5d5d"></div>
<div class="t" style="left:1150px;top:200px;font-size:10px;font-weight:bold;color:#e4e4e4;letter-spacing:0">Adjustments</div>
<div class="a" style="left:1216px;top:195px;width:42px;height:17px;background:#434343;border-right:1px solid #363636;border-top:1px solid #4a4a4a"></div>
<div class="t" style="left:1223px;top:200px;font-size:10px;font-weight:bold;color:#a8a8a8;letter-spacing:-0.15px">Styles</div>
<div class="a" style="left:1258px;top:211px;width:108px;height:1px;background:#353535"></div>
<div class="a" style="left:1258px;top:212px;width:108px;height:1px;background:#5f5f5f"></div>
<svg class="a" style="left:0;top:0" width="1366" height="725"><path d="M1347 201 H1351 L1349 204Z" fill="#d8d8d8"/><path d="M1352 200.5 H1361 M1352 202.5 H1361 M1352 204.5 H1361 M1352 206.5 H1361" stroke="#d8d8d8" stroke-width="1"/></svg>
<div class="a" style="left:1143px;top:315px;width:223px;height:3px;background:#2b2b2b"></div>
<div class="a" style="left:1143px;top:318px;width:223px;height:407px;background:#535353"></div>
<div class="a" style="left:1143px;top:318px;width:223px;height:17px;background:#3c3c3c"></div>
<div class="a" style="left:1143px;top:318px;width:43px;height:17px;background:#535353;border-top:1px solid #5d5d5d"></div>
<div class="t" style="left:1150px;top:323px;font-size:10px;font-weight:bold;color:#e4e4e4;letter-spacing:0">Layers</div>
<div class="a" style="left:1186px;top:318px;width:56px;height:17px;background:#434343;border-right:1px solid #363636;border-top:1px solid #4a4a4a"></div>
<div class="t" style="left:1193px;top:323px;font-size:10px;font-weight:bold;color:#a8a8a8;letter-spacing:-0.15px">Channels</div>
<div class="a" style="left:1242px;top:318px;width:41px;height:17px;background:#434343;border-right:1px solid #363636;border-top:1px solid #4a4a4a"></div>
<div class="t" style="left:1249px;top:323px;font-size:10px;font-weight:bold;color:#a8a8a8;letter-spacing:-0.15px">Paths</div>
<div class="a" style="left:1283px;top:334px;width:83px;height:1px;background:#353535"></div>
<div class="a" style="left:1283px;top:335px;width:83px;height:1px;background:#5f5f5f"></div>
<svg class="a" style="left:0;top:0" width="1366" height="725"><path d="M1347 324 H1351 L1349 327Z" fill="#d8d8d8"/><path d="M1352 323.5 H1361 M1352 325.5 H1361 M1352 327.5 H1361 M1352 329.5 H1361" stroke="#d8d8d8" stroke-width="1"/></svg>
<svg class="a" style="left:0;top:0" width="1366" height="200"><defs><linearGradient id="gR" x1="0" x2="1"><stop offset="0" stop-color="#000"/><stop offset="1" stop-color="#f00"/></linearGradient><linearGradient id="gG" x1="0" x2="1"><stop offset="0" stop-color="#000"/><stop offset="1" stop-color="#0f0"/></linearGradient><linearGradient id="gB" x1="0" x2="1"><stop offset="0" stop-color="#000"/><stop offset="1" stop-color="#00f"/></linearGradient><linearGradient id="spec" x1="0" x2="1"><stop offset="0" stop-color="#e62a22"/><stop offset="0.08" stop-color="#ef8a20"/><stop offset="0.17" stop-color="#f2e020"/><stop offset="0.34" stop-color="#22a040"/><stop offset="0.5" stop-color="#18a8e0"/><stop offset="0.68" stop-color="#1c2c80"/><stop offset="0.84" stop-color="#d01c70"/><stop offset="1" stop-color="#e0201e"/></linearGradient><linearGradient id="specv" x1="0" x2="0" y1="0" y2="1"><stop offset="0" stop-color="#fff" stop-opacity="0.75"/><stop offset="0.45" stop-color="#fff" stop-opacity="0"/><stop offset="0.45" stop-color="#000" stop-opacity="0"/><stop offset="1" stop-color="#000" stop-opacity="0.75"/></linearGradient><linearGradient id="thumb" x1="0" x2="0" y1="0" y2="1"><stop offset="0" stop-color="#e0e0e0"/><stop offset="1" stop-color="#8a8a8a"/></linearGradient></defs><rect x="1158.5" y="111.5" width="19" height="19" fill="#fff" stroke="#3a3a3a"/><rect x="1147.5" y="100.5" width="21" height="21" fill="#000" stroke="#8a8a8a"/><rect x="1149.5" y="102.5" width="17" height="17" fill="#000" stroke="#fff" stroke-width="1.3"/><rect x="1201.5" y="101.5" width="85" height="6" fill="url(#gR)" stroke="#8c8c8c" stroke-width="1"/><path d="M1197 114 L1202 108.5 L1207 114 V117 Q1207 117.5 1206 117.5 H1198 Q1197 117.5 1197 117Z" fill="url(#thumb)" stroke="#3a3a3a" stroke-width="0.8"/><rect x="1291.5" y="99.5" width="47" height="19" fill="#3d3d3d" stroke="#484848" stroke-width="1"/><rect x="1201.5" y="125.5" width="85" height="6" fill="url(#gG)" stroke="#8c8c8c" stroke-width="1"/><path d="M1197 138 L1202 132.5 L1207 138 V141 Q1207 141.5 1206 141.5 H1198 Q1197 141.5 1197 141Z" fill="url(#thumb)" stroke="#3a3a3a" stroke-width="0.8"/><rect x="1291.5" y="123.5" width="47" height="19" fill="#3d3d3d" stroke="#484848" stroke-width="1"/><rect x="1201.5" y="149.5" width="85" height="6" fill="url(#gB)" stroke="#8c8c8c" stroke-width="1"/><path d="M1197 162 L1202 156.5 L1207 162 V165 Q1207 165.5 1206 165.5 H1198 Q1197 165.5 1197 165Z" fill="url(#thumb)" stroke="#3a3a3a" stroke-width="0.8"/><rect x="1291.5" y="147.5" width="47" height="19" fill="#3d3d3d" stroke="#484848" stroke-width="1"/><rect x="1148.5" y="174.5" width="199" height="15" fill="url(#spec)" stroke="#2e2e2e"/><rect x="1149" y="175" width="190" height="14" fill="url(#specv)"/><rect x="1339" y="175" width="8" height="7" fill="#fff"/><rect x="1339" y="182" width="8" height="7" fill="#000"/></svg>
<div class="t" style="left:1186px;top:105px;font-size:10px;font-weight:bold;color:#e8e8e8">R</div>
<div class="t" style="left:1297px;top:105px;font-size:10px;color:#e8e8e8">0</div>
<div class="t" style="left:1186px;top:129px;font-size:10px;font-weight:bold;color:#e8e8e8">G</div>
<div class="t" style="left:1297px;top:129px;font-size:10px;color:#e8e8e8">0</div>
<div class="t" style="left:1186px;top:153px;font-size:10px;font-weight:bold;color:#e8e8e8">B</div>
<div class="t" style="left:1297px;top:153px;font-size:10px;color:#e8e8e8">0</div>
<div class="t" style="left:1152px;top:218px;font-size:10.5px;font-weight:bold;color:#f0f0f0">Add an adjustment</div>
<svg class="a" style="left:0;top:0" width="1366" height="330"><defs><linearGradient id="ag" x1="0" x2="1" y1="0" y2="1"><stop offset="0" stop-color="#d8d8d8"/><stop offset="1" stop-color="#8a8a8a"/></linearGradient><linearGradient id="ag2" x1="0" x2="1"><stop offset="0" stop-color="#202020"/><stop offset="1" stop-color="#c8c8c8"/></linearGradient><radialGradient id="ar"><stop offset="0" stop-color="#6a6a6a"/><stop offset="1" stop-color="#c8c8c8"/></radialGradient></defs><circle cx="1197.5" cy="244.5" r="4" fill="none" stroke="#c4c4c4" stroke-width="1.2"/><path d="M1197.5 240.5 A4 4 0 0 1 1197.5 248.5Z" fill="#c4c4c4"/><line x1="1203.5" y1="244.5" x2="1205.5" y2="244.5" stroke="#c4c4c4" stroke-width="1.3"/><line x1="1201.7" y1="248.7" x2="1203.2" y2="250.2" stroke="#c4c4c4" stroke-width="1.3"/><line x1="1197.5" y1="250.5" x2="1197.5" y2="252.5" stroke="#c4c4c4" stroke-width="1.3"/><line x1="1193.3" y1="248.7" x2="1191.8" y2="250.2" stroke="#c4c4c4" stroke-width="1.3"/><line x1="1191.5" y1="244.5" x2="1189.5" y2="244.5" stroke="#c4c4c4" stroke-width="1.3"/><line x1="1193.3" y1="240.3" x2="1191.8" y2="238.8" stroke="#c4c4c4" stroke-width="1.3"/><line x1="1197.5" y1="238.5" x2="1197.5" y2="236.5" stroke="#c4c4c4" stroke-width="1.3"/><line x1="1201.7" y1="240.3" x2="1203.2" y2="238.8" stroke="#c4c4c4" stroke-width="1.3"/><path d="M1213 248.5 V243 L1214 240 L1215 244 L1216.5 241 L1217.5 244 L1219 238 L1220 243 L1221.5 240 L1222.5 243 L1224 237.5 L1225 242 L1226.5 240 L1227.5 244 L1229 241 L1230.5 244 V248.5Z" fill="#8a8a8a" stroke="#c4c4c4" stroke-width="0.9"/><rect x="1213" y="246" width="17.5" height="3" fill="#c4c4c4"/><rect x="1238.5" y="237.5" width="16" height="14" fill="#6a6a6a" stroke="#c4c4c4"/><path d="M1238.5 242.5 H1254.5 M1238.5 247 H1254.5 M1243.5 237.5 V251.5 M1249 237.5 V251.5" stroke="#999" stroke-width="0.7"/><path d="M1239 251 Q1246 251 1247 244 Q1248 238 1254 238" fill="none" stroke="#e0e0e0" stroke-width="1.1"/><rect x="1262.5" y="237.5" width="16" height="13" fill="url(#ag)" stroke="#c4c4c4"/><path d="M1263 250 L1278 238" stroke="#444" stroke-width="1"/><path d="M1264 241.5 H1268 M1266 239.5 V243.5 M1272 247.5 H1276" stroke="#333" stroke-width="1"/><path d="M1286 237 H1302 L1294 252Z" fill="url(#ar)" stroke="#bbb" stroke-width="0.8"/><rect x="1178.5" y="264.5" width="16" height="13" fill="url(#ag2)" stroke="#c4c4c4"/><rect x="1179" y="265" width="15" height="5" fill="#b8b8b8"/><path d="M1182 265 V270 M1186 265 V270 M1190 265 V270" stroke="#777" stroke-width="1"/><path d="M1209 265 V276 M1203 268 H1215" stroke="#c4c4c4" stroke-width="1.2"/><path d="M1207 265 H1211 L1209 268Z" fill="#c4c4c4"/><path d="M1201 277 A3 2 0 0 0 1207 277Z M1211 277 A3 2 0 0 0 1217 277Z" fill="#c4c4c4"/><path d="M1203.5 268.5 L1201 277 M1204.5 268.5 L1207 277 M1213.5 268.5 L1211 277 M1214.5 268.5 L1217 277" stroke="#c4c4c4" stroke-width="0.6"/><rect x="1226.5" y="264.5" width="16" height="13" fill="url(#ag)" stroke="#c4c4c4"/><rect x="1227" y="265" width="7" height="12" fill="#333"/><rect x="1250" y="265" width="14" height="9" fill="#a8a8a8" stroke="#ccc" stroke-width="0.8"/><rect x="1252" y="263.5" width="4" height="2" fill="#bbb"/><circle cx="1255" cy="269" r="2.5" fill="#777" stroke="#ccc" stroke-width="0.8"/><circle cx="1260" cy="273.5" r="5" fill="#888" stroke="#ccc" stroke-width="1.2"/><circle cx="1281" cy="268.5" r="4.2" fill="#999" stroke="#bbb" stroke-width="0.6"/><circle cx="1278" cy="273.5" r="4.2" fill="#aaa" stroke="#bbb" stroke-width="0.6"/><circle cx="1284.5" cy="273.5" r="4.2" fill="#aaa" stroke="#bbb" stroke-width="0.6"/><path d="M1278.5 268.5 H1283.5 L1281 273Z" fill="#555"/><rect x="1298.5" y="264.5" width="16" height="13" fill="#4e4e4e" stroke="#c4c4c4"/><path d="M1298.5 268.5 H1314.5 M1298.5 273 H1314.5 M1303.5 264.5 V277.5 M1309 264.5 V277.5" stroke="#c4c4c4" stroke-width="1"/><rect x="1190.5" y="292.5" width="15" height="12.5" fill="url(#ag)" stroke="#c4c4c4"/><ellipse cx="1199" cy="299" rx="4" ry="3.5" fill="#555" transform="rotate(-30 1199 299)"/><path d="M1191 305 L1205 293" stroke="#3a3a3a" stroke-width="1"/><rect x="1214.5" y="292.5" width="15" height="12.5" fill="url(#ag)" stroke="#c4c4c4"/><path d="M1215 302 L1224 293 M1218 305 L1230 294 M1222 305 L1230 298" stroke="#666" stroke-width="1.5"/><rect x="1238.5" y="292.5" width="15" height="12.5" fill="url(#ag)" stroke="#c4c4c4"/><path d="M1239 303 L1243 300 H1246 L1250 296 H1254" fill="none" stroke="#333" stroke-width="2"/><rect x="1262.5" y="292.5" width="15" height="12.5" fill="#9a9a9a" stroke="#c4c4c4"/><path d="M1263 293 L1270.5 299 L1278 293Z M1263 305 L1270.5 299 L1278 305Z" fill="#666"/><rect x="1286.5" y="292.5" width="15" height="12.5" fill="url(#ag2)" stroke="#c4c4c4"/></svg>
<div class="a" style="left:1143px;top:362px;width:223px;height:1px;background:#3a3a3a"></div>
<div class="a" style="left:1143px;top:363px;width:223px;height:1px;background:#5f5f5f"></div>
<div class="a" style="left:1143px;top:390px;width:223px;height:1px;background:#3a3a3a"></div>
<div class="a" style="left:1143px;top:391px;width:223px;height:1px;background:#5f5f5f"></div>
<div class="a" style="left:1143px;top:420px;width:223px;height:1px;background:#3a3a3a"></div>
<div class="a" style="left:1143px;top:421px;width:207px;height:287px;background:#474747"></div>
<div class="a" style="left:1350px;top:421px;width:16px;height:287px;background:linear-gradient(90deg,#353535,#424242 60%,#3a3a3a)"></div>
<div class="a" style="left:1143px;top:447px;width:207px;height:1px;background:#3a3a3a"></div>
<div class="a" style="left:1143px;top:421px;width:31px;height:26px;background:#474747;border-right:1px solid #3a3a3a"></div>
<div class="a" style="left:1174px;top:421px;width:176px;height:26px;background:#5b697c"></div>
<div class="a" style="left:1176px;top:424px;width:33px;height:20px;background:#fff;border:1px solid #222"></div>
<div class="t" style="left:1220px;top:429px;font-size:10px;font-style:italic;color:#f2f2f2">Background</div>
<div class="a" style="left:1143px;top:708px;width:223px;height:1px;background:#2e2e2e"></div>
<div class="a" style="left:1143px;top:709px;width:223px;height:16px;background:#535353;border-top:1px solid #5f5f5f"></div>
<div class="a" style="left:1148px;top:340px;width:69px;height:19px;border:1px solid #3a3a3a;border-radius:2px;background:linear-gradient(#5e5e5e,#535353);box-shadow:inset 0 1px 0 #666"></div>
<div class="a" style="left:1148px;top:368px;width:110px;height:19px;border:1px solid #3a3a3a;border-radius:2px;background:linear-gradient(#5e5e5e,#535353);box-shadow:inset 0 1px 0 #666"></div>
<div class="a" style="left:1307px;top:368px;width:54px;height:19px;border:1px solid #3e3e3e;background:#494949"></div>
<div class="a" style="left:1342px;top:369px;width:18px;height:17px;background:#535353;border-left:1px solid #3e3e3e"></div>
<div class="a" style="left:1307px;top:396px;width:54px;height:18px;border:1px solid #3e3e3e;background:#494949"></div>
<div class="a" style="left:1342px;top:397px;width:18px;height:16px;background:#535353;border-left:1px solid #3e3e3e"></div>
<div class="t" style="left:1169px;top:344px;font-size:10px;color:#b8b8b8">Kind</div>
<div class="t" style="left:1155px;top:372px;font-size:10px;color:#b8b8b8">Normal</div>
<div class="t" style="left:1265px;top:371px;font-size:10px;color:#b0b0b0">Opacity:</div>
<div class="t" style="left:1312px;top:372px;font-size:10px;color:#7a7a7a">100%</div>
<div class="t" style="left:1149px;top:401px;font-size:10px;color:#b0b0b0">Lock:</div>
<div class="t" style="left:1287px;top:399px;font-size:10px;color:#b0b0b0">Fill:</div>
<div class="t" style="left:1312px;top:400px;font-size:10px;color:#7a7a7a">100%</div>
<svg class="a" style="left:0;top:0" width="1366" height="725"><circle cx="1157.5" cy="347.5" r="2.8" fill="none" stroke="#8a8a8a" stroke-width="1.2"/><path d="M1155.5 349.5 L1152.5 352.5" stroke="#8a8a8a" stroke-width="1.5"/><path d="M1207 347 L1209.5 344 L1212 347Z M1207 350 L1209.5 353 L1212 350Z" fill="#c8c8c8"/><path d="M1248 375 L1250.5 372 L1253 375Z M1248 378 L1250.5 381 L1253 378Z" fill="#c8c8c8"/><path d="M1348 376.5 H1354 L1351 379.5Z M1348 404.5 H1354 L1351 407.5Z" fill="#c8c8c8"/><rect x="1229.5" y="343.5" width="13" height="10" fill="none" stroke="#8a8a8a"/><path d="M1231 352 L1235 348 L1237 350 L1239 348.5 L1241 352Z" fill="#8a8a8a"/><rect x="1238" y="345" width="2" height="2" fill="#8a8a8a"/><circle cx="1258.5" cy="348" r="5" fill="#8a8a8a"/><path d="M1255 351.5 L1262 344.5" stroke="#535353" stroke-width="1.2"/><path d="M1279.5 346 V343.5 H1290.5 V346 M1285 343.5 V354 M1282 354 H1288" fill="none" stroke="#8a8a8a" stroke-width="1.5"/><rect x="1303.5" y="343.5" width="9" height="9" fill="none" stroke="#8a8a8a"/><circle cx="1303.5" cy="343.5" r="1.3" fill="#8a8a8a"/><circle cx="1312.5" cy="343.5" r="1.3" fill="#8a8a8a"/><circle cx="1303.5" cy="352.5" r="1.3" fill="#8a8a8a"/><circle cx="1312.5" cy="352.5" r="1.3" fill="#8a8a8a"/><path d="M1331.5 342.5 H1335 L1337.5 345 V353.5 H1331.5Z" fill="none" stroke="#8a8a8a"/><rect x="1326" y="348" width="6" height="6" fill="#8a8a8a"/><rect x="1351" y="341" width="10" height="17" fill="#3e3e3e" stroke="#333"/><rect x="1352" y="342" width="8" height="7" fill="#666"/><rect x="1182" y="398" width="11" height="11" fill="#8a8a8a"/><rect x="1182" y="398" width="3" height="3" fill="#666"/><rect x="1188" y="398" width="3" height="3" fill="#666"/><rect x="1185" y="401" width="3" height="3" fill="#666"/><rect x="1191" y="401" width="2" height="3" fill="#666"/><rect x="1182" y="404" width="3" height="3" fill="#666"/><rect x="1188" y="404" width="3" height="3" fill="#666"/><rect x="1185" y="407" width="3" height="2" fill="#666"/><rect x="1191" y="407" width="2" height="2" fill="#666"/><path d="M1217 398 L1209 406" stroke="#8a8a8a" stroke-width="1.6"/><path d="M1202 409.5 Q1204 405.5 1208 405.5 Q1210 407 1208.5 408.5 Q1206 410.5 1202 409.5Z" fill="#8a8a8a"/><path d="M1231.5 398 V411 M1225 404.5 H1238" stroke="#8a8a8a" stroke-width="1"/><path d="M1229.5 400 L1231.5 398 L1233.5 400 M1229.5 409 L1231.5 411 L1233.5 409 M1227 402.5 L1225 404.5 L1227 406.5 M1236 402.5 L1238 404.5 L1236 406.5" fill="none" stroke="#8a8a8a" stroke-width="1"/><path d="M1250.5 403 V400.5 Q1250.5 397.5 1253.5 397.5 Q1256.5 397.5 1256.5 400.5 V403" fill="none" stroke="#8a8a8a" stroke-width="1.3"/><rect x="1249" y="403" width="9" height="7" fill="#8a8a8a"/><path d="M1152 433.5 Q1158 427.5 1164 433.5 Q1158 439.5 1152 433.5Z" fill="#c8c8c8"/><circle cx="1158" cy="433.5" r="2" fill="#333"/><rect x="1176.5" y="424.5" width="32" height="19" fill="#fff" stroke="#111" stroke-dasharray="1 1"/><path d="M1325 433 V431 Q1325 428.5 1328 428.5 Q1331 428.5 1331 431 V433" fill="none" stroke="#d0d0d0" stroke-width="1.1"/><rect x="1323.5" y="433.5" width="9" height="6.5" fill="none" stroke="#d0d0d0"/><rect x="1327.5" y="435" width="1" height="2.5" fill="#d0d0d0"/><path d="M1166.5 715.5 H1163 Q1159.5 715.5 1159.5 718.5 Q1159.5 721.5 1163 721.5 H1166.5 M1169.5 715.5 H1173 Q1176.5 715.5 1176.5 718.5 Q1176.5 721.5 1173 721.5 H1169.5 M1163.5 718.5 H1172.5" fill="none" stroke="#8c8c8c" stroke-width="1.5"/><text x="1190" y="724" font-family="Liberation Serif" font-style="italic" font-size="13" fill="#8c8c8c">fx</text><rect x="1217" y="713" width="13" height="10" fill="#8c8c8c"/><circle cx="1223.5" cy="718" r="2.6" fill="#535353"/><circle cx="1249.5" cy="718" r="5" fill="#8c8c8c"/><path d="M1246 721.5 L1253 714.5" stroke="#535353" stroke-width="1.2"/><path d="M1254 723 L1256 723 L1255 724.5Z" fill="#8c8c8c"/><path d="M1271 714 H1275 L1276.5 715.5 H1283 V723 H1271Z" fill="#8c8c8c"/><path d="M1296 713 H1305 V723 H1298 L1296 721Z" fill="#8c8c8c"/><path d="M1296 721 L1299 721 L1299 724" stroke="#535353" stroke-width="0.8" fill="none"/><path d="M1324 715.5 H1336 M1328 715 V713.5 H1332 V715" fill="none" stroke="#8c8c8c" stroke-width="1.2"/><path d="M1325.5 717 L1326.5 725 H1333.5 L1334.5 717" fill="none" stroke="#8c8c8c" stroke-width="1.1"/><path d="M1328.3 718 V724 M1330 718 V724 M1331.7 718 V724" stroke="#8c8c8c" stroke-width="0.8"/></svg>
<div id="menu" class="a">
<div class="it" style="top:2px"><span class="l">New...</span><span class="r">Ctrl+N</span></div>
<div class="it" style="top:21px"><span class="l">Open...</span><span class="r">Ctrl+O</span></div>
<div class="it" style="top:40px"><span class="l">Browse in Bridge...</span><span class="r">Alt+Ctrl+O</span></div>
<div class="it" style="top:59px"><span class="l">Browse in Mini Bridge...</span></div>
<div class="it" style="top:78px"><span class="l">Open As...</span><span class="r">Alt+Shift+Ctrl+O</span></div>
<div class="it" style="top:97px"><span class="l">Open as Smart Object...</span></div>
<div class="it" style="top:116px"><span class="l">Open Recent</span><span class="arr"></span></div>
<div class="ms" style="top:138px"></div><div class="ms2" style="top:139px"></div>
<div class="it" style="top:144px"><span class="l">Close</span><span class="r">Ctrl+W</span></div>
<div class="it" style="top:163px"><span class="l">Close All</span><span class="r">Alt+Ctrl+W</span></div>
<div class="it" style="top:182px"><span class="l">Close and Go to Bridge...</span><span class="r">Shift+Ctrl+W</span></div>
<div class="it d" style="top:201px"><span class="l">Save</span><span class="r">Ctrl+S</span></div>
<div class="it" style="top:220px"><span class="l">Save As...</span><span class="r">Shift+Ctrl+S</span></div>
<div class="it d" style="top:239px"><span class="l">Check In...</span></div>
<div class="it" style="top:258px"><span class="l">Save for Web...</span><span class="r">Alt+Shift+Ctrl+S</span></div>
<div class="it d" style="top:277px"><span class="l">Revert</span><span class="r">F12</span></div>
<div class="ms" style="top:299px"></div><div class="ms2" style="top:300px"></div>
<div class="it h" style="top:305px"><span class="l">Place...</span></div>
<div class="ms" style="top:327px"></div><div class="ms2" style="top:328px"></div>
<div class="it" style="top:333px"><span class="l">Import</span><span class="arr"></span></div>
<div class="it" style="top:352px"><span class="l">Export</span><span class="arr"></span></div>
<div class="ms" style="top:374px"></div><div class="ms2" style="top:375px"></div>
<div class="it" style="top:380px"><span class="l">Automate</span><span class="arr"></span></div>
<div class="it" style="top:399px"><span class="l">Scripts</span><span class="arr"></span></div>
<div class="ms" style="top:421px"></div><div class="ms2" style="top:422px"></div>
<div class="it" style="top:427px"><span class="l">File Info...</span><span class="r">Alt+Shift+Ctrl+I</span></div>
<div class="ms" style="top:449px"></div><div class="ms2" style="top:450px"></div>
<div class="it" style="top:455px"><span class="l">Print...</span><span class="r">Ctrl+P</span></div>
<div class="it" style="top:474px"><span class="l">Print One Copy</span><span class="r">Alt+Shift+Ctrl+P</span></div>
<div class="ms" style="top:496px"></div><div class="ms2" style="top:497px"></div>
<div class="it" style="top:502px"><span class="l">Exit</span><span class="r">Ctrl+Q</span></div>
</div>
</body></html>
